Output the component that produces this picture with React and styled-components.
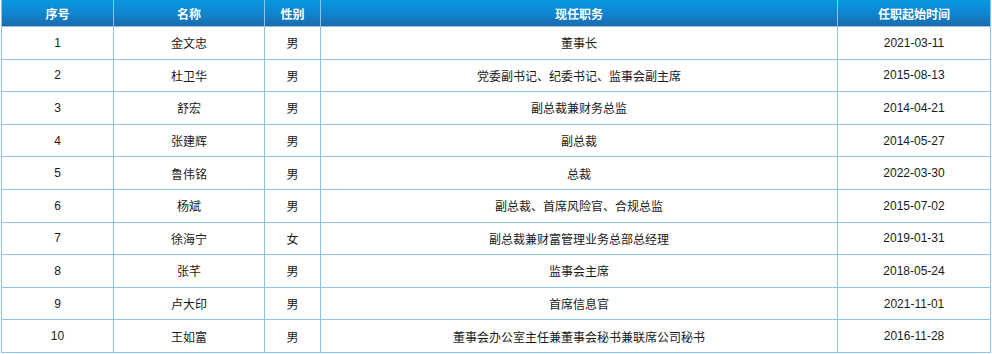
import React from "react";
import styled, { createGlobalStyle } from "styled-components";

const GlobalStyle = createGlobalStyle`
  body {
    margin: 0;
    background: #fff;
    font-family: "Liberation Sans", "Noto Sans CJK SC", sans-serif;
  }
`;

const Wrap = styled.div`
  padding-left: 1px;
  width: 990px;
`;

const Table = styled.table`
  width: 990px;
  border-collapse: collapse;
  table-layout: fixed;
  font-size: 12px;
  color: #1a1a1a;
`;

const Th = styled.th`
  height: 26px;
  padding: 0;
  font-weight: bold;
  color: #fff;
  background: linear-gradient(to bottom, #0599e2 0%, #0f86cf 50%, #1b6aad 100%);
  border-left: 1px solid #8fc3ee;
  border-right: 1px solid #8fc3ee;
  text-align: center;
  ${(p) => (p.$w ? `width: ${p.$w}px;` : "")}
`;

const Row = styled.tr`
  height: 32.6px;
`;

const Td = styled.td`
  padding: 0;
  text-align: center;
  border: 1px solid #8fc3ee;
`;

const cols = [
  { label: "序号", w: 111 },
  { label: "名称", w: 150 },
  { label: "性别", w: 55 },
  { label: "现任职务", w: 516 },
  { label: "任职起始时间" },
];

const rows = [
  ["1", "金文忠", "男", "董事长", "2021-03-11"],
  ["2", "杜卫华", "男", "党委副书记、纪委书记、监事会副主席", "2015-08-13"],
  ["3", "舒宏", "男", "副总裁兼财务总监", "2014-04-21"],
  ["4", "张建辉", "男", "副总裁", "2014-05-27"],
  ["5", "鲁伟铭", "男", "总裁", "2022-03-30"],
  ["6", "杨斌", "男", "副总裁、首席风险官、合规总监", "2015-07-02"],
  ["7", "徐海宁", "女", "副总裁兼财富管理业务总部总经理", "2019-01-31"],
  ["8", "张芊", "男", "监事会主席", "2018-05-24"],
  ["9", "卢大印", "男", "首席信息官", "2021-11-01"],
  ["10", "王如富", "男", "董事会办公室主任兼董事会秘书兼联席公司秘书", "2016-11-28"],
];

export default function App() {
  return (
    <Wrap>
      <GlobalStyle />
      <Table>
        <thead>
          <tr>
            {cols.map((c) => (
              <Th key={c.label} $w={c.w}>
                {c.label}
              </Th>
            ))}
          </tr>
        </thead>
        <tbody>
          {rows.map((r) => (
            <Row key={r[0]}>
              {r.map((v, i) => (
                <Td key={i}>{v}</Td>
              ))}
            </Row>
          ))}
        </tbody>
      </Table>
    </Wrap>
  );
}
